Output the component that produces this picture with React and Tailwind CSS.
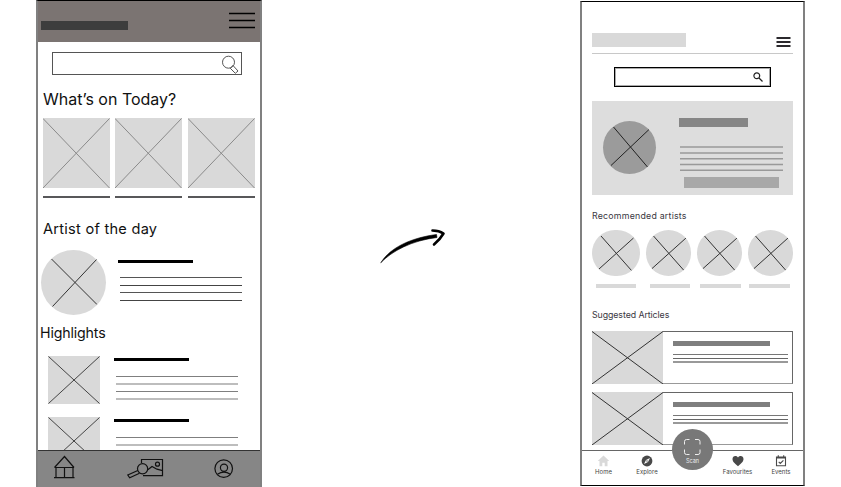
import React from "react";

function Cross({ className, w, h, lines, stroke = "#333", width = 1 }) {
  return (
    <svg className={className} viewBox={`0 0 ${w} ${h}`} width={w} height={h} fill="none" stroke={stroke} strokeWidth={width}>
      {lines.map((d) => (
        <path key={d} d={d} />
      ))}
    </svg>
  );
}

function TodayCard() {
  return (
    <div className="w-[67px]">
      <Cross className="block bg-[#d9d9d9]" w={67} h={70} stroke="#8a8a8a" lines={["M0 0.5 66.5 70", "M66.5 0.5 0 70"]} />
      <div className="mt-2 h-[2px] bg-[#58585a]" />
    </div>
  );
}

function Highlight({ className }) {
  return (
    <div className={className}>
      <Cross className="block shrink-0 bg-[#d9d9d9]" w={52} h={48} stroke="#444" lines={["M0.5 0.5 51.5 47.5", "M51.5 0.5 0.5 47.5"]} />
      <div className="ml-[14px] pt-[2px]">
        <div className="h-[3px] w-[75px] bg-black" />
        <div className="ml-[2px] mt-[15px] w-[122px]">
          <div className="h-px bg-[#7f7f7f]" />
          <div className="mt-[6px] h-[2px] bg-[#bdbdbd]" />
          <div className="mt-[6px] h-px bg-[#7f7f7f]" />
          <div className="mt-[6px] h-[2px] bg-[#bdbdbd]" />
        </div>
      </div>
    </div>
  );
}

function OldPhone() {
  return (
    <section className="ml-9 flex h-[487px] w-[226px] flex-col overflow-hidden border-x-2 border-t border-[#808080] border-t-black bg-white">
      <header className="-mx-px flex h-[41px] shrink-0 items-start justify-between border-x border-[#444] bg-[#7b7472] pl-[3px] pr-[5px]">
        <div className="mt-5 h-[9px] w-[87px] bg-[#3d3d3d]" />
        <svg className="mt-[11px] block" width="26" height="18" stroke="#000" strokeWidth="1.5">
          <path d="M0 1.5H26M0 8.5H26M0 15.5H26" />
        </svg>
      </header>

      <div className="ml-[14px] mt-[10px] flex h-[23px] w-[190px] shrink-0 justify-end border border-[#555] pr-[2px]">
        <svg className="mt-[2px] block" width="18" height="19" fill="none" stroke="#555" strokeWidth="1">
          <circle cx="7.5" cy="7.2" r="6" />
          <path d="M9.2 13.2 12 10.5 17 16 14.3 18.3Z" />
        </svg>
      </div>

      <h2 className="ml-[5px] mt-[14px] h-5 whitespace-nowrap text-[16px] leading-5 text-[#111]">What’s on Today?</h2>
      <div className="ml-[5px] mt-[9px] flex w-[212px] shrink-0 gap-[5px]">
        <TodayCard />
        <TodayCard />
        <div className="pl-px">
          <TodayCard />
        </div>
      </div>

      <h2 className="ml-[5px] mt-[21px] h-5 whitespace-nowrap text-[14.6px] leading-5 tracking-[0.25px] text-[#111]">Artist of the day</h2>
      <div className="ml-[3px] mt-[11px] flex shrink-0">
        <Cross className="block rounded-full bg-[#d9d9d9]" w={65} h={65} lines={["M10.5 9 56 54.5", "M56 9 11.5 56.5"]} />
        <div className="ml-3 pt-[10px]">
          <div className="h-[3px] w-[75px] bg-black" />
          <div className="ml-[2px] mt-[14px] w-[122px]">
            <div className="h-px bg-[#555]" />
            <div className="mt-[7px] h-px bg-[#444]" />
            <div className="mt-[6px] h-px bg-[#555]" />
            <div className="mt-[7px] h-px bg-[#444]" />
          </div>
        </div>
      </div>

      <h2 className="ml-[2px] mt-[8px] h-5 shrink-0 whitespace-nowrap text-[14.2px] leading-5 tracking-[-0.15px] text-[#111]">Highlights</h2>
      <div className="mt-[13px] h-[94px] shrink-0 overflow-hidden">
        <Highlight className="ml-[10px] flex" />
        <Highlight className="ml-[10px] mt-[13px] flex" />
      </div>

      <nav className="-mx-px flex h-[38px] shrink-0 border border-[#333] border-b-black bg-[#868686]">
        <svg className="block" width="222" height="36" fill="none" stroke="#111" strokeWidth="1.2">
          <path d="M16.5 16.5 26.5 5.5 36 16.5M16.5 16.5H36M18 16.5V26.7M35 16.5V26.7M26.5 16.5V26.7M16 26.7H36.5" />
          <path d="M103.5 12V8.5H124.5V24.7H105M109.8 18.8 114 15.5 119 18.2 124.5 19.7" />
          <circle cx="119.5" cy="13.2" r="2" />
          <circle cx="104.6" cy="17.8" r="5.1" />
          <path d="M99.800 19.500 89.800 24 91.700 26.800 101.500 22.300" />
          <circle cx="185.700" cy="17.600" r="8.800" />
          <circle cx="186" cy="16.700" r="3.600" />
          <path d="M179.500 23.300Q186 19 192.300 23.300" />
        </svg>
      </nav>
    </section>
  );
}

function ArtistCircle({ w }) {
  return (
    <Cross className="block rounded-full bg-[#d9d9d9]" w={w} h={46} lines={[`M${w / 2 - 15} 6 ${w / 2 + 15.5} 40.500`, `M${w / 2 + 17.5} 8 ${w / 2 - 17} 39`]} />
  );
}

function Article({ className }) {
  return (
    <div className={className}>
      <Cross className="block shrink-0 bg-[#d9d9d9]" w={71} h={53} lines={["M0 0.500 71 53", "M71 0.500 0 53"]} />
      <div className="flex-1 border border-l-0 border-[#666] border-b-[#999] pl-[10px] pt-[9px]">
        <div className="h-[5px] w-[97px] bg-[#7f7f7f]" />
        <div className="mt-2 w-[115px]">
          <div className="h-px bg-[#777]" />
          <div className="mt-[3px] h-px bg-[#666]" />
          <div className="mt-[2px] h-[2px] bg-[#999]" />
        </div>
      </div>
    </div>
  );
}

function Tab({ className, label, children }) {
  return (
    <div className={className}>
      {children}
      <span className="mt-px block whitespace-nowrap text-[6px] leading-[8px] text-[#444]">{label}</span>
    </div>
  );
}

function NewPhone() {
  return (
    <section className="mt-px flex h-[485px] w-[225px] flex-col overflow-hidden border-2 border-y border-[#808080] border-y-black bg-white">
      <div className="ml-[10px] mt-[31px] flex h-[21px] w-[201px] shrink-0 justify-between border-b border-[#c8c8c8] pr-[2px]">
        <div className="h-[14px] w-[94px] bg-[#d9d9d9]" />
        <svg className="mt-1 block" width="15" height="10" stroke="#2b292d" strokeWidth="1.800">
          <path d="M0.500 1H14.500M0.500 5H14.500M0.500 9H14.500" />
        </svg>
      </div>

      <div className="ml-8 mt-[13px] flex h-5 w-[157px] shrink-0 justify-end border border-black pr-[7px] outline outline-1 -outline-offset-2 outline-[#aaa]">
        <svg className="mt-1 block" width="10" height="10" fill="none" stroke="#222" strokeWidth="1.200">
          <circle cx="3.800" cy="3.800" r="2.900" />
          <path d="M6 6 9.500 9.500" />
        </svg>
      </div>

      <div className="ml-[10px] mt-[14px] flex h-[94px] w-[201px] shrink-0 bg-[#ddd] pl-[11px]">
        <Cross className="mt-5 block rounded-full bg-[#9b9b9b]" w={53} h={53} stroke="#222" lines={["M10.500 6 44.500 46", "M46 8.500 8 44.500"]} />
        <div className="ml-[23px] pt-[17px]">
          <div className="h-[9px] w-[69px] bg-[#868686]" />
          <svg className="ml-px mt-[19px] block" width="103" height="26" stroke="#999" strokeWidth="1.500">
            <path d="M0 1H103M0 7H103M0 12.700H103M0 18.500H103M0 24.200H103" />
          </svg>
          <div className="ml-[5px] mt-[5px] h-[11px] w-[95px] bg-[#a8a8a8]" />
        </div>
      </div>

      <h3 className="ml-[10px] mt-[15px] h-3 whitespace-nowrap text-[8.800px] leading-3 tracking-[0.22px] text-[#3a3842]">Recommended artists</h3>
      <div className="ml-[10px] mt-[8px] flex w-[201px] shrink-0 justify-between">
        <ArtistCircle w={48} />
        <ArtistCircle w={45} />
        <ArtistCircle w={45} />
        <ArtistCircle w={45} />
      </div>
      <div className="ml-[14px] mt-2 flex h-1 shrink-0">
        <div className="w-10 bg-[#d9d9d9]" />
        <div className="ml-[14px] w-10 bg-[#d9d9d9]" />
        <div className="ml-[10px] w-[41px] bg-[#d9d9d9]" />
        <div className="ml-2 w-[41px] bg-[#d9d9d9]" />
      </div>

      <h3 className="ml-[10px] mt-[21px] h-3 whitespace-nowrap text-[8.800px] leading-3 tracking-[-0.08px] text-[#3a3842]">Suggested Articles</h3>
      <Article className="ml-[10px] mt-[10px] flex h-[53px] w-[201px] shrink-0" />
      <Article className="ml-[10px] mt-2 flex h-[53px] w-[201px] shrink-0" />

      <nav className="relative mt-[5px] flex h-[35px] shrink-0 border-t border-[#666] pt-[4px]">
        <Tab className="flex w-[43px] flex-col items-center" label="Home">
          <svg className="block" width="13" height="12" fill="#d9d9d9">
            <path d="M6.500 0.500 12.300 6H10.500V11.200H7.700V7.700H5.300V11.200H2.500V6H0.700Z" />
          </svg>
        </Tab>
        <Tab className="flex w-11 flex-col items-center" label="Explore">
          <svg className="block" width="12" height="12">
            <circle cx="6" cy="6" r="5.400" fill="#494949" />
            <path d="M9 3 7 7 3 9 5 5Z" fill="#fff" />
            <circle cx="6" cy="6" r="0.700" fill="#494949" />
          </svg>
        </Tab>
        <div className="w-[47px]" />
        <Tab className="flex w-[43px] flex-col items-center" label="Favourites">
          <svg className="block" width="12" height="12" fill="#494949">
            <path d="M6 11.200C2 7.800 0.500 6.300 0.500 4 0.500 1 4 0 6 2.500 8 0 11.500 1 11.500 4 11.500 6.300 10 7.800 6 11.200Z" />
          </svg>
        </Tab>
        <Tab className="flex w-11 flex-col items-center" label="Events">
          <svg className="block" width="12" height="12" fill="none" stroke="#494949" strokeWidth="1.100">
            <path d="M1.500 2H10.500V10.800H1.500ZM1.500 3H10.500M3.300 0.300V2M8.700 0.300V2M3.700 6.800 5.300 8.400 8.400 5.300" />
          </svg>
        </Tab>
        <div className="absolute left-[90px] top-[-22px] flex h-[41px] w-[41px] flex-col items-center rounded-full bg-[#787878]">
          <svg className="mt-[10px] block" width="17" height="16" fill="none" stroke="#eee" strokeWidth="1">
            <path d="M0.500 5.500V2.500Q0.500 0.500 2.500 0.500H5.500M11 0.500H14Q16 0.500 16 2.500V5.500M16 10.500V13.500Q16 15.500 14 15.500H11M5.500 15.500H2.500Q0.500 15.500 0.500 13.500V10.500" />
          </svg>
          <span className="mt-[2px] text-[5.500px] leading-[8px] text-[#eee]">Scan</span>
        </div>
      </nav>
    </section>
  );
}

export default function App() {
  return (
    <main className="flex h-[487px] w-[841px] overflow-hidden bg-white font-['Inter','Liberation_Sans',sans-serif]">
      <OldPhone />
      <div className="flex w-[318px] shrink-0 justify-center pt-[226px]">
        <svg className="-ml-4 block h-10 w-[70px]" viewBox="0 0 70 40" fill="none" stroke="#000" strokeLinecap="round" strokeLinejoin="round">
          <path d="M3 36.500C12 22 32 12 58.500 8.500L59 11.500C34 14.500 14 25 3 36.500Z" fill="#000" strokeWidth="0.600" />
          <path d="M54.500 4.500Q61 4.600 65.500 7.500 62 13.500 56 18.500" strokeWidth="2.600" />
        </svg>
      </div>
      <NewPhone />
    </main>
  );
}
